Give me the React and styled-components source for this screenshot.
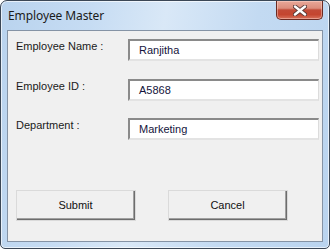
import React from "react";
import styled, { createGlobalStyle } from "styled-components";

const Global = createGlobalStyle`
  html, body { margin: 0; padding: 0; background: #ffffff; }
  * { box-sizing: border-box; }
`;

const Window = styled.div`
  width: 330px;
  height: 249px;
  border: 1px solid #3b4756;
  border-radius: 7px 7px 5px 5px;
  background: linear-gradient(100deg, #b9d3ee 0%, #c6dcf3 25%, #d9e8f7 45%, #c3daf2 70%, #bad4ef 100%);
  box-shadow: inset 0 0 0 1px rgba(255,255,255,0.65);
  display: flex;
  flex-direction: column;
  overflow: hidden;
`;

const TitleBar = styled.div`
  height: 29px;
  display: flex;
  align-items: flex-start;
  padding-left: 7px;
  padding-right: 6px;
`;

const Title = styled.div`
  font-family: "Noto Sans", "Open Sans", sans-serif;
  font-size: 12px;
  color: #1b1b1b;
  margin-top: 6px;
  letter-spacing: -0.1px;
`;

const CloseButton = styled.div`
  margin-left: auto;
  width: 47px;
  height: 19px;
  border: 1px solid #6b2a22;
  border-top: none;
  border-radius: 0 0 5px 5px;
  background: linear-gradient(180deg, #e8a899 0%, #dc8d7c 40%, #c24a36 50%, #c4452f 75%, #d7705a 100%);
  box-shadow: inset 0 0 0 1px rgba(255,220,210,0.45);
  display: flex;
  align-items: center;
  justify-content: center;
`;

const Client = styled.div`
  flex: 1;
  margin: 0 6px 6px 6px;
  background: #f0f0f0;
  border: 1px solid #8593a5;
  display: flex;
  flex-direction: column;
  padding: 8px 0 0 8px;
`;

const Form = styled.div`
  display: flex;
  flex-direction: column;
  gap: 17.5px;
`;

const Row = styled.div`
  display: grid;
  grid-template-columns: 112px 191px;
  align-items: start;
`;

const Label = styled.div`
  font-family: "Liberation Sans", Arial, sans-serif;
  font-size: 11px;
  color: #1a1a1a;
  padding-top: 1px;
`;

const TextBox = styled.div`
  height: 22px;
  background: #ffffff;
  border-top: 2px solid #8a8a8a;
  border-left: 2px solid #8a8a8a;
  border-right: 1px solid #dcdcdc;
  border-bottom: 2px solid #e3e3e3;
  font-family: "Liberation Sans", Arial, sans-serif;
  font-size: 11px;
  color: #14143c;
  padding-left: 9px;
  display: flex;
  align-items: center;
`;

const ButtonRow = styled.div`
  display: flex;
  gap: 32px;
  margin-top: 50px;
`;

const Button = styled.div`
  width: 120px;
  height: 31px;
  background: #f0f0f0;
  border-top: 1px solid #ffffff;
  border-left: 1px solid #ffffff;
  border-right: 2px solid #6d6d6d;
  border-bottom: 2px solid #6d6d6d;
  box-shadow: inset -1px -1px 0 #a0a0a0, 0 0 0 0 transparent;
  outline: 1px solid #dadada;
  outline-offset: -1px;
  font-family: "Liberation Sans", Arial, sans-serif;
  font-size: 11px;
  color: #111;
  display: flex;
  align-items: center;
  justify-content: center;
`;

const CloseGlyph = () => (
  <svg width="14" height="11" viewBox="0 0 14 11">
    <path d="M2 1.5 L12 9.5 M12 1.5 L2 9.5" stroke="#5a3a38" strokeWidth="4.2" strokeLinecap="round" />
    <path d="M2 1.5 L12 9.5 M12 1.5 L2 9.5" stroke="#ffffff" strokeWidth="2.4" strokeLinecap="round" />
  </svg>
);

const fields = [
  { label: "Employee Name :", value: "Ranjitha" },
  { label: "Employee ID :", value: "A5868" },
  { label: "Department :", value: "Marketing" },
];

export default function App() {
  return (
    <>
      <Global />
      <Window>
        <TitleBar>
          <Title>Employee Master</Title>
          <CloseButton>
            <CloseGlyph />
          </CloseButton>
        </TitleBar>
        <Client>
          <Form>
            {fields.map((f) => (
              <Row key={f.label}>
                <Label>{f.label}</Label>
                <TextBox>{f.value}</TextBox>
              </Row>
            ))}
          </Form>
          <ButtonRow>
            <Button>Submit</Button>
            <Button>Cancel</Button>
          </ButtonRow>
        </Client>
      </Window>
    </>
  );
}
